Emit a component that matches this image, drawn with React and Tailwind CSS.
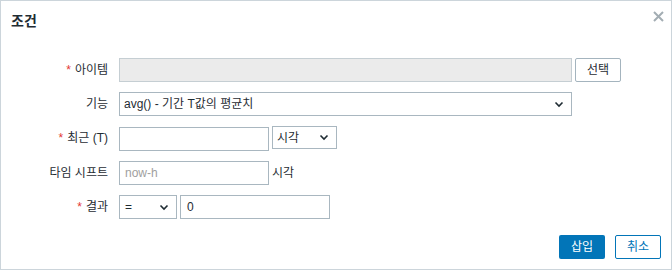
import React from "react";

const Chevron = () => (
  <svg width="10" height="7" viewBox="0 0 10 7" className="shrink-0">
    <path d="M1.5 1.5 L5 5 L8.5 1.5" fill="none" stroke="#1f2c33" strokeWidth="1.6" />
  </svg>
);

const Star = () => <span className="text-[#e33734] mr-[4px]">*</span>;

function Row({ label, req, children, className = "" }) {
  return (
    <div className={"flex items-center h-[24px] " + className}>
      <div className="w-[107px] text-right shrink-0 leading-[14px]">
        {req && <Star />}
        {label}
      </div>
      <div className="ml-[11px] flex items-center">{children}</div>
    </div>
  );
}

export default function App() {
  return (
    <div className="w-[672px] h-[270px] bg-white border border-[#ccd5db] flex flex-col text-[12px] text-[#1f2c33] font-['Liberation_Sans','Noto_Sans_CJK_KR',sans-serif]">
      <div className="flex justify-between items-start pl-[10px] pr-[7px] pt-[11px]">
        <h2 className="text-[14px] font-bold leading-[18px] text-[#1f2c33]">조건</h2>
        <svg width="11" height="11" viewBox="0 0 11 11" className="mt-[-1px]">
          <path d="M1 1 L10 10 M10 1 L1 10" stroke="#a3adb3" strokeWidth="2" />
        </svg>
      </div>

      <div className="mt-[28px] flex flex-col">
        <Row label="아이템" req>
          <div className="w-[453px] h-[24px] bg-[#ebebeb] border border-[#c5ced3]" />
          <button className="ml-[3px] w-[46px] h-[24px] bg-white border border-[#a4b4be] rounded-[2px] text-[#1f2c33] leading-[14px]">
            선택
          </button>
        </Row>
        <Row label="기능" className="mt-[10px]">
          <div className="w-[453px] h-[24px] border border-[#a9b7c0] flex items-center justify-between pl-[4px] pr-[7px]">
            <span className="leading-[14px]">avg() - 기간 T값의 평균치</span>
            <Chevron />
          </div>
        </Row>
        <Row label="최근 (T)" req className="mt-[10px]">
          <div className="w-[150px] h-[24px] border border-[#a9b7c0] mt-[1px]" />
          <div className="ml-[3px] w-[65px] h-[23px] border border-[#a9b7c0] flex items-center justify-between pl-[4px] pr-[7px] mt-[-1px]">
            <span className="leading-[14px]">시각</span>
            <Chevron />
          </div>
        </Row>
        <Row label="타임 시프트" className="mt-[11px]">
          <div className="w-[150px] h-[24px] border border-[#a9b7c0] flex items-center pl-[5px]">
            <span className="text-[#a0a0a0] leading-[14px]">now-h</span>
          </div>
          <span className="ml-[3px] leading-[14px]">시각</span>
        </Row>
        <Row label="결과" req className="mt-[10px]">
          <div className="w-[58px] h-[24px] border border-[#a9b7c0] flex items-center justify-between pl-[5px] pr-[7px]">
            <span className="leading-[14px]">=</span>
            <Chevron />
          </div>
          <div className="ml-[3px] w-[150px] h-[24px] border border-[#a9b7c0] flex items-center pl-[6px]">
            <span className="leading-[14px]">0</span>
          </div>
        </Row>
      </div>

      <div className="mt-auto flex justify-end gap-[10px] pr-[10px] pb-[10px]">
        <button className="w-[46px] h-[24px] bg-[#0275b8] text-white rounded-[2px] leading-[14px]">삽입</button>
        <button className="w-[46px] h-[24px] bg-white border border-[#0275b8] text-[#0275b8] rounded-[2px] leading-[14px]">취소</button>
      </div>
    </div>
  );
}
